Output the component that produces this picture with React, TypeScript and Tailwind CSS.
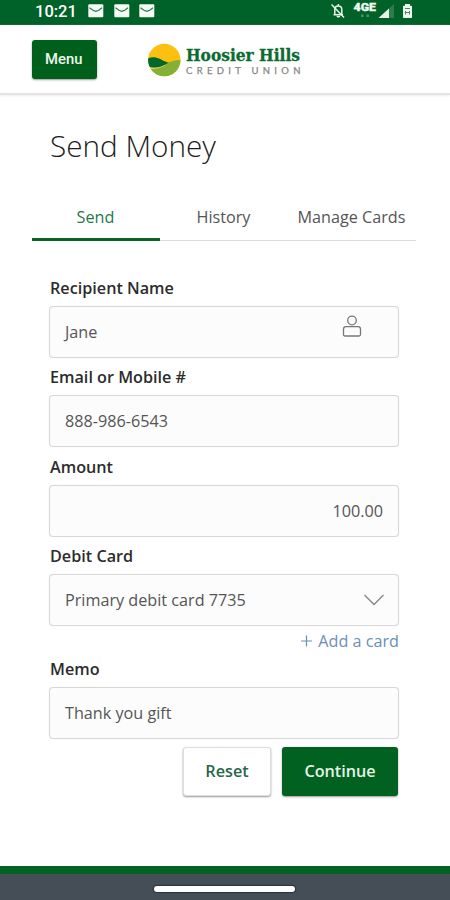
import type { ReactNode } from "react";

function Mail() {
  return (
    <svg width="16" height="14" viewBox="0 0 16 14">
      <rect x="0.3" y="0.3" width="15" height="13" rx="1" fill="#f4fbf4" />
      <path d="M1.500 3.800 5 6.200 7.800 7.300 10.800 6.200 14 3.800" fill="none" stroke="#2c7643" strokeWidth="1.100" />
    </svg>
  );
}

function StatusBar() {
  return (
    <div className="flex h-[25px] items-start bg-[#006129] text-white">
      <span className="ml-[35px] mt-[2px] w-[42px] whitespace-nowrap font-['Roboto',sans-serif] text-[16.500px] font-medium leading-[20px]">
        10:21
      </span>
      <div className="ml-[11px] mt-[4px] flex gap-[9.500px]">
        <Mail />
        <Mail />
        <Mail />
      </div>
      <svg className="ml-auto" width="125" height="25" viewBox="325 0 125 25">
        <g fill="none" stroke="#e6f3e8" strokeWidth="1.500">
          <path d="M333.500 14.800h9.500M334.800 15V9.500c0-2.200 1.400-3.600 3.400-3.600s3.600 1.400 3.600 3.600V15M338.300 4v2" />
          <path d="M331.500 4.500 344 17.500" />
        </g>
        <path d="M336.500 16h3.600c-.2 2-3.400 2-3.600 0z" fill="#e6f3e8" />
        <text x="353.500" y="10.500" fill="#f2faf3" stroke="#f2faf3" strokeWidth="0.300" fontFamily="Roboto, sans-serif" fontSize="11" fontWeight="900" textLength="22.500" lengthAdjust="spacingAndGlyphs">4GE</text>
        <path d="M361 14.500h2.500v2.500H361zM366.500 14.500h2.500v2.500h-2.500z" fill="#4c9163" />
        <path d="M378.500 18 394 4v14z" fill="#2f7c4b" />
        <path d="M378.500 18 389 8.500V18z" fill="#e6f3e8" />
        <path d="M405 4h5v1.800h1.200q.8 0 .8.800v10.600q0 .8-.8.800h-7.400q-.8 0-.8-.8V6.600q0-.8.8-.8h1.200z" fill="#edf7ef" />
        <path d="M405 8.500h5M405.500 11v3.500M409.500 11v3.500M405.500 12.500h4" stroke="#4b8760" fill="none" />
      </svg>
    </div>
  );
}

function Logo() {
  return (
    <svg width="200" height="44" viewBox="145 38 200 44">
      <defs>
        <clipPath id="disc">
          <circle cx="164.300" cy="60" r="16.200" />
        </clipPath>
      </defs>
      <g clipPath="url(#disc)">
        <rect x="145" y="40" width="40" height="40" fill="#fcc010" />
        <path d="M147 68c8 0 14-1.500 19-4 5-2.700 9-4 16-4V78h-35z" fill="#84b135" />
        <path d="M147 65.500h8c6-.5 9-1.500 12-3l-2 3c-5 3-12 4-18 3.500z" fill="#e9cf6a" />
        <path d="M147 59c3-1.600 6-2 9.500-1.300 5 1 7 4 12.500 4.800-4 2-6 4-11.500 4.800-4 .6-8 0-10.500-1.600z" fill="#00682a" />
      </g>
      <text x="186" y="61" fill="#0b6b30" stroke="#0b6b30" strokeWidth="0.300" fontFamily="'DejaVu Serif Condensed', 'DejaVu Serif', serif" fontSize="17.500" fontWeight="bold" textLength="114" lengthAdjust="spacingAndGlyphs">Hoosier Hills</text>
      <text x="186" y="74" fill="#858585" stroke="#858585" strokeWidth="0.250" fontFamily="Lato, sans-serif" fontSize="9.500" textLength="114.500" lengthAdjust="spacing">CREDIT UNION</text>
    </svg>
  );
}

function Tab({ children, active }: { children: ReactNode; active?: boolean }) {
  return (
    <button
      className={
        active
          ? "h-[48px] w-32 whitespace-nowrap border-b-[3px] border-[#096424] pt-[3px] text-[#25784a]"
          : "h-[48px] w-32 whitespace-nowrap border-b border-[#d9dadb] pt-px text-[#555]"
      }
    >
      {children}
    </button>
  );
}

function Field({ label, children, right }: { label: string; children: ReactNode; right?: boolean }) {
  return (
    <div className="h-[89.500px]">
      <div className="flex h-[36px] items-center pl-px font-semibold text-[#2c2c2c]">{label}</div>
      <div
        className={
          right
            ? "flex h-[52px] items-center justify-end rounded-[4px] border border-[#d8d8d8] bg-[#fcfcfc] px-[15px] text-[#555] shadow-[0_0_1px_#ddd]"
            : "flex h-[52px] items-center justify-between rounded-[4px] border border-[#d8d8d8] bg-[#fcfcfc] pl-[15px] pr-[14px] text-[#555] shadow-[0_0_1px_#ddd]"
        }
      >
        {children}
      </div>
    </div>
  );
}

export default function App() {
  return (
    <div className="flex h-[900px] w-[450px] flex-col overflow-hidden bg-white font-['Open_Sans','Noto_Sans',sans-serif] text-[16.200px] leading-[24px]">
      <StatusBar />
      <header className="flex h-[70px] items-start border-b-2 border-[#e3e3e3] shadow-[0_1px_2px_#eee]">
        <button className="ml-8 mt-[15px] h-[39px] w-[64.500px] rounded-[3px] bg-[#00601b] pb-[2px] pr-px font-['Roboto',sans-serif] text-[14.800px] font-medium text-[#edf7ee] shadow-[0_1px_2px_#0006]">
          Menu
        </button>
        <div className="ml-[48.500px] mt-[13px]">
          <Logo />
        </div>
      </header>
      <h1 className="ml-[50px] mt-[31px] h-[40px] whitespace-nowrap text-[29.700px] font-[330] leading-[40px] text-[#1c1c1c]">
        Send Money
      </h1>
      <nav className="ml-[31.500px] mt-[26.500px] flex h-[48px] w-96">
        <Tab active>Send</Tab>
        <Tab>History</Tab>
        <Tab>Manage Cards</Tab>
      </nav>
      <main className="ml-[49px] mt-[29px] w-[350px]">
        <Field label="Recipient Name">
          <span>Jane</span>
          <svg className="mb-[12px] mr-[21px]" width="22" height="24" viewBox="0 0 22 24" fill="none" stroke="#777" strokeWidth="1.300">
            <circle cx="11" cy="6.500" r="4.300" />
            <path d="M5 12.700h12q2.500 0 2.500 2.500v5.300q0 1.500-1.500 1.500H4q-1.500 0-1.500-1.500v-5.300q0-2.500 2.500-2.500z" />
          </svg>
        </Field>
        <Field label="Email or Mobile #">888-986-6543</Field>
        <Field label="Amount" right>100.00</Field>
        <Field label="Debit Card">
          <span>Primary debit card 7735</span>
          <svg width="20" height="12" viewBox="0 0 20 12" fill="none" stroke="#858585" strokeWidth="1.300">
            <path d="M.5 1 10 10.500 19.500 1" />
          </svg>
        </Field>
        <div className="-mt-[1px] flex h-[24px] items-center justify-end gap-[5px] pt-[5px] text-[#6c8fb5]">
          <svg width="12" height="12" viewBox="0 0 12 12" fill="none" stroke="#6c8fb5" strokeWidth="1.200">
            <path d="M0 6h11M5.500.5v11" />
          </svg>
          <span>Add a card</span>
        </div>
        <Field label="Memo">Thank you gift</Field>
        <div className="mt-[6.500px] flex justify-end gap-[11px] pr-px font-semibold">
          <button className="h-[49px] w-[88px] rounded-[3px] border border-[#ddd] bg-white text-[#28674a] shadow-[0_1px_2px_#0006]">
            Reset
          </button>
          <button className="h-[49px] w-[116px] rounded-[3px] bg-[#006120] text-[#e4f4e5] shadow-[0_1px_2px_#0006]">
            Continue
          </button>
        </div>
      </main>
      <footer className="mt-auto flex h-[34px] items-center justify-center border-t-[8px] border-[#046324] bg-[#454e57]">
        <div className="mr-[2px] mt-[4px] h-[6px] w-[141px] rounded-full bg-white shadow-[0_0_1px_1px_#29343a]" />
      </footer>
    </div>
  );
}
